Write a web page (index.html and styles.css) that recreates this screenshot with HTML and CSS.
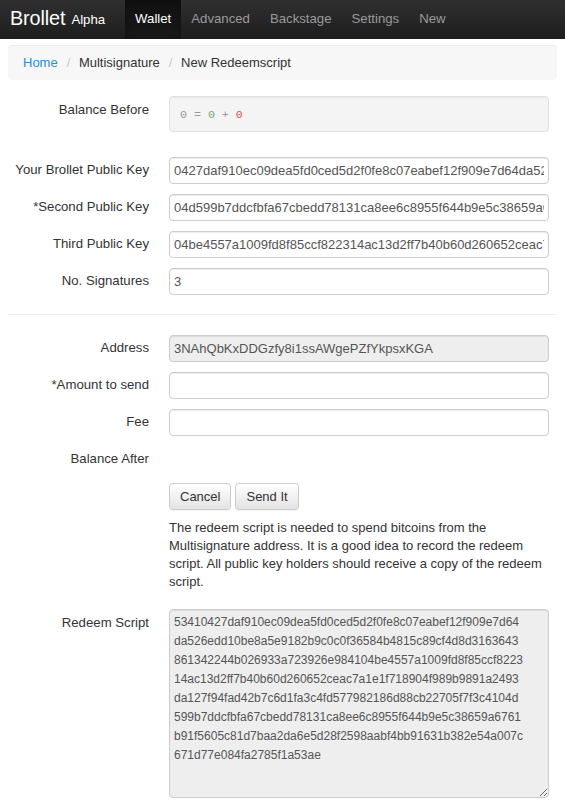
FILE: index.html
```html
<!DOCTYPE html>
<html>
<head>
<meta charset="utf-8">
<title>Brollet</title>
<link rel="stylesheet" href="styles.css">
</head>
<body>
<nav class="navbar">
  <a class="brand">Brollet <small>Alpha</small></a>
  <ul class="nav">
    <li class="active"><a>Wallet</a></li>
    <li><a>Advanced</a></li>
    <li><a>Backstage</a></li>
    <li><a>Settings</a></li>
    <li><a>New</a></li>
  </ul>
</nav>
<main class="page">
  <ol class="breadcrumb">
    <li><a class="link">Home</a></li>
    <li>Multisignature</li>
    <li>New Redeemscript</li>
  </ol>

  <form class="form">
    <div class="row row-top">
      <label class="label label-top">Balance Before</label>
      <div class="well"><span class="c-gray">0</span> <span class="c-gray">=</span> <span class="c-green">0</span> <span class="c-gray">+</span> <span class="c-red">0</span></div>
    </div>

    <div class="row row-first">
      <label class="label">Your Brollet Public Key</label>
      <input class="input" type="text" value="0427daf910ec09dea5fd0ced5d2f0fe8c07eabef12f909e7d64da526edd10be8a5e9182b9c0c0f36584b4815c89cf4d8d3163643861342244b026933a723926e98">
    </div>
    <div class="row">
      <label class="label">*Second Public Key</label>
      <input class="input" type="text" value="04d599b7ddcfbfa67cbedd78131ca8ee6c8955f644b9e5c38659a6761b91f5605c81d7baa2da6e5d28f2598aabf4bb91631b382e54a007c671d77e084fa2785f1a">
    </div>
    <div class="row">
      <label class="label">Third Public Key</label>
      <input class="input" type="text" value="04be4557a1009fd8f85ccf822314ac13d2ff7b40b60d260652ceac7a1e1f718904f989b9891a2493da127f94fad42b7c6d1fa3c4fd577982186d88cb22705f7f3c">
    </div>
    <div class="row">
      <label class="label">No. Signatures</label>
      <input class="input" type="text" value="3">
    </div>

    <hr class="divider">

    <div class="row">
      <label class="label">Address</label>
      <input class="input" type="text" value="3NAhQbKxDDGzfy8i1ssAWgePZfYkpsxKGA" disabled>
    </div>
    <div class="row">
      <label class="label">*Amount to send</label>
      <input class="input" type="text">
    </div>
    <div class="row">
      <label class="label">Fee</label>
      <input class="input" type="text">
    </div>
    <div class="row row-empty">
      <label class="label">Balance After</label>
      <div></div>
    </div>

    <div class="row row-actions">
      <div></div>
      <div class="actions">
        <button type="button" class="btn">Cancel</button>
        <button type="button" class="btn">Send It</button>
        <p class="help">The redeem script is needed to spend bitcoins from the Multisignature address. It is a good idea to record the redeem script. All public key holders should receive a copy of the redeem script.</p>
      </div>
    </div>

    <div class="row row-top">
      <label class="label label-top">Redeem Script</label>
      <textarea class="script" readonly>53410427daf910ec09dea5fd0ced5d2f0fe8c07eabef12f909e7d64
da526edd10be8a5e9182b9c0c0f36584b4815c89cf4d8d3163643
861342244b026933a723926e984104be4557a1009fd8f85ccf8223
14ac13d2ff7b40b60d260652ceac7a1e1f718904f989b9891a2493
da127f94fad42b7c6d1fa3c4fd577982186d88cb22705f7f3c4104d
599b7ddcfbfa67cbedd78131ca8ee6c8955f644b9e5c38659a6761
b91f5605c81d7baa2da6e5d28f2598aabf4bb91631b382e54a007c
671d77e084fa2785f1a53ae</textarea>
    </div>
  </form>
</main>
</body>
</html>
```

FILE: styles.css
```css
* { box-sizing: border-box; }

html, body {
  margin: 0;
  padding: 0;
  background: #fff;
  font-family: "Liberation Sans", Arial, sans-serif;
  font-size: 13px;
  line-height: 18.5px;
  color: #333;
  overflow: hidden;
}

.navbar {
  display: flex;
  align-items: stretch;
  height: 39px;
  background: linear-gradient(to bottom, #303030 0%, #1d1d1d 100%);
}

.brand {
  display: flex;
  align-items: center;
  padding: 0 20px 0 10px;
  color: #fff;
  font-size: 19.8px;
  letter-spacing: -0.1px;
  margin-top: -3px;
}

.brand small {
  font-size: 13.2px;
  margin-left: 6px;
  letter-spacing: 0;
  margin-top: 4px;
}

.nav {
  display: flex;
  list-style: none;
  margin: 0;
  padding: 0;
}

.nav li a {
  display: block;
  padding: 0 10px;
  line-height: 37px;
  height: 39px;
  color: #9a9a9a;
  font-size: 13.2px;
}

.nav li.active a {
  color: #fff;
  background: linear-gradient(to bottom, #121212 0%, #181818 100%);
  box-shadow: inset 0 3px 9px rgba(0, 0, 0, 0.25);
}

.page {
  padding: 6px 8px 0 8px;
}

.breadcrumb {
  list-style: none;
  margin: 0 0 16px 0;
  padding: 0 15px;
  height: 35px;
  display: flex;
  align-items: center;
  background: #f7f7f7;
  border-top: 1px solid #ececec;
  border-radius: 4px;
}

.breadcrumb li + li::before {
  content: "/\00a0";
  padding: 0 5px 0 9px;
  color: #c8c8c8;
}

.link {
  color: #2e8ccf;
}

.form {
  margin: 0;
  padding-right: 8px;
}

.row {
  display: grid;
  grid-template-columns: 141px 1fr;
  column-gap: 20px;
  align-items: center;
  margin-bottom: 10px;
}

.row-top {
  align-items: start;
}

.row-first {
  margin-top: 25px;
}

.label {
  text-align: right;
  font-weight: normal;
  font-size: 13.2px;
  white-space: nowrap;
}

.label-top {
  padding-top: 5px;
}

.well {
  height: 36px;
  padding: 9px 10px;
  background: #f4f4f4;
  border: 1px solid #e0e0e0;
  border-radius: 4px;
  box-shadow: inset 0 1px 1px rgba(0, 0, 0, 0.04);
  font-family: "Liberation Mono", "DejaVu Sans Mono", monospace;
  font-size: 11.6px;
  line-height: 18px;
  margin-bottom: 0;
}

.c-gray { color: #999; }
.c-green { color: #6cae6c; }
.c-red { color: #d9534f; }

.input {
  display: block;
  width: 100%;
  height: 27px;
  padding: 0 4px;
  margin: 0;
  font-family: "Liberation Sans", Arial, sans-serif;
  font-size: 13px;
  color: #555;
  background: #fff;
  border: 1px solid #cccccc;
  border-radius: 4px;
  box-shadow: inset 0 1px 1px rgba(0, 0, 0, 0.075);
  outline: none;
}

.input:disabled {
  background: #eeeeee;
  color: #555;
}

.divider {
  border: 0;
  border-top: 1px solid #eeeeee;
  margin: 19px -8px 20px 0;
}

.row-empty {
  height: 27px;
}

.actions {
  font-size: 0;
}

.btn {
  display: inline-block;
  height: 26.5px;
  padding: 0 10px;
  margin: 0 4px 0 0;
  font-family: "Liberation Sans", Arial, sans-serif;
  font-size: 13px;
  color: #333;
  background: linear-gradient(to bottom, #ffffff 0%, #e3e3e3 100%);
  border: 1px solid #cccccc;
  border-radius: 4px;
  box-shadow: inset 0 1px 0 rgba(255, 255, 255, 0.15), 0 1px 1px rgba(0, 0, 0, 0.06);
}

.help {
  margin: 9px 0 0 0;
  font-size: 13px;
  line-height: 18px;
  color: #333;
}

.row-actions {
  margin-bottom: 18px;
}

.script {
  display: block;
  width: 100%;
  height: 189px;
  padding: 3px 4px;
  margin: 0;
  font-family: "Liberation Sans", Arial, sans-serif;
  font-size: 12px;
  line-height: 19px;
  color: #555;
  background: #eeeeee;
  border: 1px solid #cccccc;
  border-radius: 4px;
  box-shadow: inset 0 1px 1px rgba(0, 0, 0, 0.075);
  white-space: pre;
  overflow: hidden;
  resize: both;
  outline: none;
}
```
